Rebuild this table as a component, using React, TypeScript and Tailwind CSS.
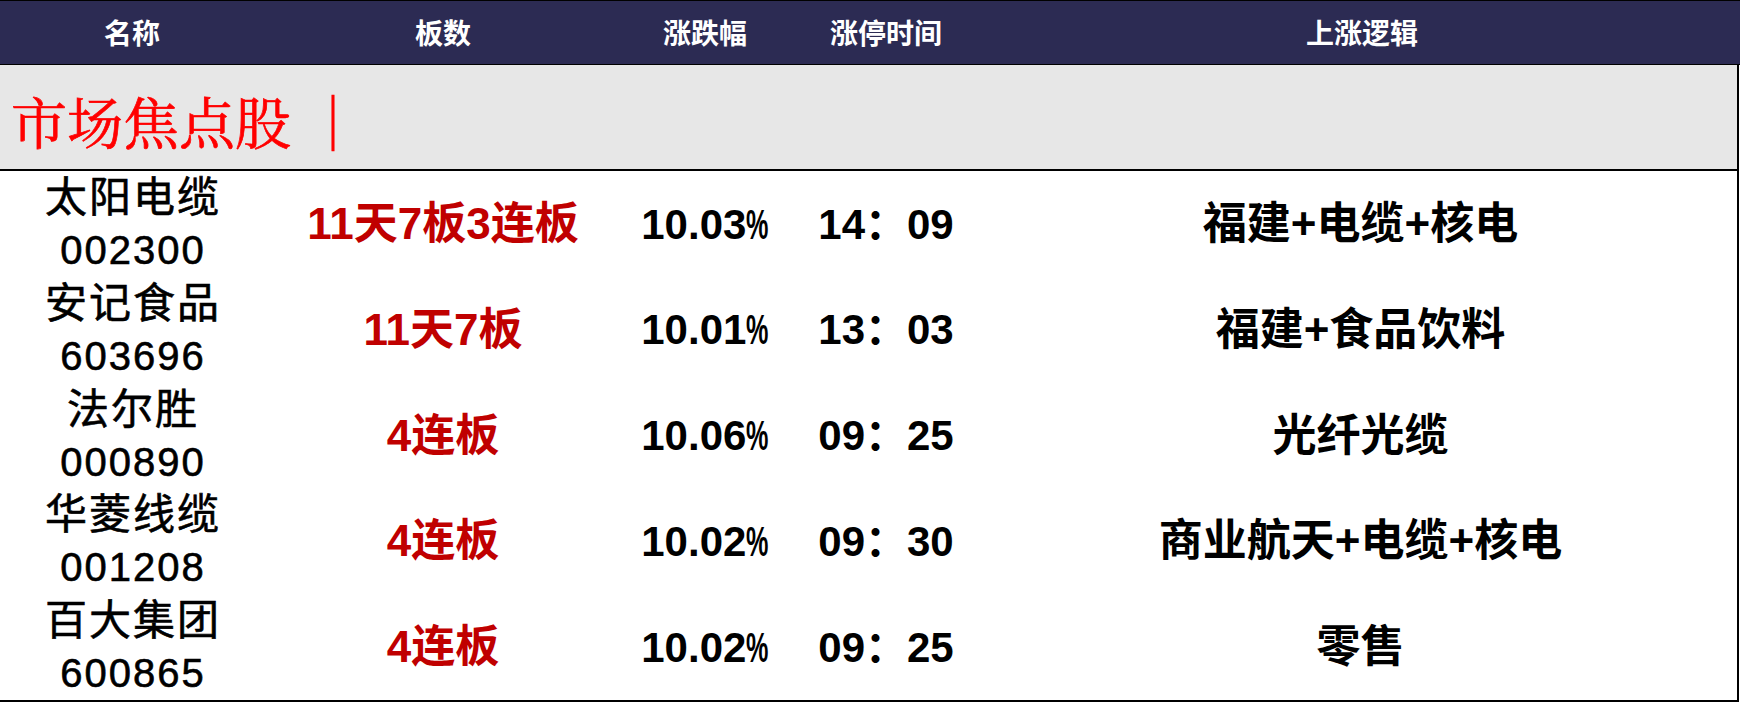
import React from 'react';

interface StockRow {
  name: string;
  code: string;
  boards: string;
  pct: string;
  time: string;
  logic: string;
}

const rows: StockRow[] = [
  { name: '太阳电缆', code: '002300', boards: '11天7板3连板', pct: '10.03', time: '14：09', logic: '福建+电缆+核电' },
  { name: '安记食品', code: '603696', boards: '11天7板', pct: '10.01', time: '13：03', logic: '福建+食品饮料' },
  { name: '法尔胜', code: '000890', boards: '4连板', pct: '10.06', time: '09：25', logic: '光纤光缆' },
  { name: '华菱线缆', code: '001208', boards: '4连板', pct: '10.02', time: '09：30', logic: '商业航天+电缆+核电' },
  { name: '百大集团', code: '600865', boards: '4连板', pct: '10.02', time: '09：25', logic: '零售' },
];

const cols = 'grid grid-cols-[264px_358px_166px_196px_1fr]';
const sans = "font-['Liberation_Sans','Noto_Sans_CJK_SC',sans-serif]";

export default function App() {
  return (
    <div className={`w-[1740px] h-[702px] bg-white overflow-hidden ${sans}`}>
      {/* Header */}
      <div className={`${cols} h-[65px] bg-[#2c2b53] border-t border-b border-black text-white text-[28px] font-bold`}>
        <div className="flex items-center justify-center pt-[4px]">名称</div>
        <div className="flex items-center justify-center pt-[4px]">板数</div>
        <div className="flex items-center justify-center pt-[4px]">涨跌幅</div>
        <div className="flex items-center justify-center pt-[4px]">涨停时间</div>
        <div className="flex items-center justify-center pt-[4px]">上涨逻辑</div>
      </div>

      {/* Section band */}
      <div className="w-[1739px] h-[106px] bg-[#e7e7e7] border-r-2 border-b-2 border-black flex items-center pl-[11px] pt-[6px]">
        <span className="font-['Noto_Serif_CJK_SC','AR_PL_UMing_CN','Noto_Sans_CJK_SC',serif] text-[56px] leading-none text-[#ff0000] [-webkit-text-stroke:0.7px_#ff0000]">
          市场焦点股<span className="ml-[14px]">｜</span>
        </span>
      </div>

      {/* Rows */}
      <div className="w-[1739px] border-r-2 border-b-2 border-black">
        {rows.map((r) => (
          <div key={r.code} className={`${cols} h-[105.8px]`}>
            <div className="flex flex-col items-center justify-center leading-[53px] text-black pl-[2px] [-webkit-text-stroke:0.6px_#000]">
              <span className="text-[42px] tracking-[2px]">{r.name}</span>
              <span className="text-[40px] tracking-[2px]">{r.code}</span>
            </div>
            <div className="flex items-center justify-center text-[44px] font-bold text-[#c00000]">
              {r.boards}
            </div>
            <div className="flex items-center justify-center text-[42px] font-bold text-black">
              <span>{r.pct}</span>
              <span className="inline-block origin-left scale-x-[0.6] -mr-[15px]">%</span>
            </div>
            <div className="flex items-center justify-center text-[42px] font-bold text-black">
              {r.time}
            </div>
            <div className="flex items-center justify-center text-[44px] font-bold text-black">
              {r.logic}
            </div>
          </div>
        ))}
      </div>
    </div>
  );
}
